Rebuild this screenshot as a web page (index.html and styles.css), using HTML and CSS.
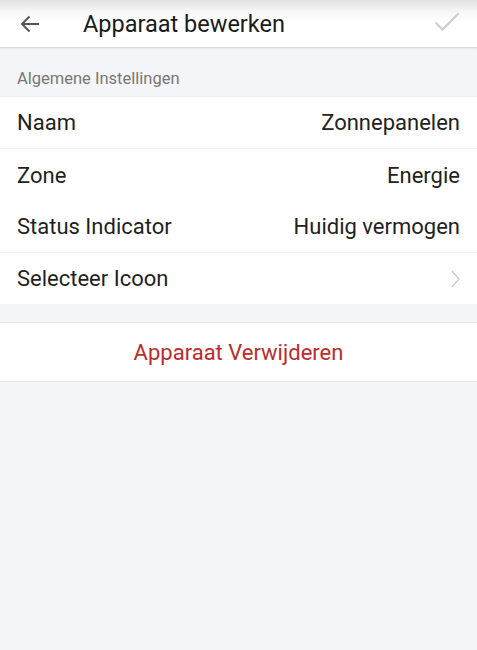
FILE: index.html
```html
<!DOCTYPE html>
<html lang="nl">
<head>
    <meta charset="UTF-8">
    <meta name="viewport" content="width=device-width, initial-scale=1.0">
    <title>Apparaat bewerken</title>
    <link rel="stylesheet" href="styles.css">
</head>
<body>
    <header class="toolbar">
        <button class="icon-btn back" aria-label="Terug">
            <svg width="20" height="18" viewBox="0 0 20 18">
                <path d="M19 9H2M9.5 1.5L2 9l7.5 7.5" fill="none" stroke="#555" stroke-width="2"/>
            </svg>
        </button>
        <h1 class="title">Apparaat bewerken</h1>
        <button class="icon-btn save" aria-label="Opslaan">
            <svg width="26" height="20" viewBox="0 0 26 20">
                <path d="M1.5 10.5l7 7L24.5 1.5" fill="none" stroke="#cfcfcf" stroke-width="2.4"/>
            </svg>
        </button>
    </header>

    <div class="section-label">Algemene Instellingen</div>

    <div class="list">
        <div class="row">
            <span class="label">Naam</span>
            <span class="value">Zonnepanelen</span>
        </div>
        <div class="row no-line">
            <span class="label">Zone</span>
            <span class="value">Energie</span>
        </div>
        <div class="row">
            <span class="label">Status Indicator</span>
            <span class="value">Huidig vermogen</span>
        </div>
        <div class="row last">
            <span class="label">Selecteer Icoon</span>
            <svg class="chevron" width="9" height="18" viewBox="0 0 9 18">
                <path d="M1 1l7 8-7 8" fill="none" stroke="#c8c8c8" stroke-width="1.2"/>
            </svg>
        </div>
    </div>

    <div class="list danger">
        <button class="delete">Apparaat Verwijderen</button>
    </div>
</body>
</html>
```

FILE: styles.css
```css
body {
    margin: 0;
    font-family: 'Roboto', 'Noto Sans', sans-serif;
    background-color: #f4f5f8;
    color: #1f1f1f;
    min-height: 100vh;
}

.toolbar {
    display: flex;
    align-items: center;
    height: 47px;
    padding: 0 10px 0 10px;
    background: linear-gradient(to bottom, #e2e2e2 0, #f7f7f7 12px, #fff 22px);
    border-bottom: 1px solid #dcdcdc;
    box-shadow: 0 1px 2px rgba(0, 0, 0, 0.06);
}

.icon-btn {
    display: flex;
    align-items: center;
    justify-content: center;
    background: none;
    border: none;
    padding: 0;
    cursor: pointer;
}

.back {
    width: 40px;
    height: 40px;
}

.title {
    flex: 1;
    margin: 0 0 0 33px;
    font-size: 23.5px;
    font-weight: 400;
    color: #1a1a1a;
}

.save {
    width: 40px;
    height: 40px;
    margin-top: -4px;
}

.section-label {
    padding: 21px 17px 8px;
    font-size: 16.5px;
    line-height: 19px;
    color: #777;
    border-bottom: 1px solid #eceef1;
}

.list {
    background-color: #fff;
}

.row {
    display: flex;
    align-items: center;
    justify-content: space-between;
    height: 51px;
    padding: 0 17px;
    font-size: 22px;
    border-bottom: 1px solid #eeeff2;
}

.row.no-line,
.row.last {
    border-bottom: none;
}

.row.no-line {
    height: 52px;
}

.value {
    color: #222;
}

.danger {
    margin-top: 18px;
    border-top: 1px solid #e6e7ea;
    border-bottom: 1px solid #e6e7ea;
}

.delete {
    display: block;
    width: 100%;
    height: 58px;
    padding: 0;
    background: none;
    border: none;
    font-family: inherit;
    font-size: 22px;
    color: #bd2b2b;
    cursor: pointer;
}
```
